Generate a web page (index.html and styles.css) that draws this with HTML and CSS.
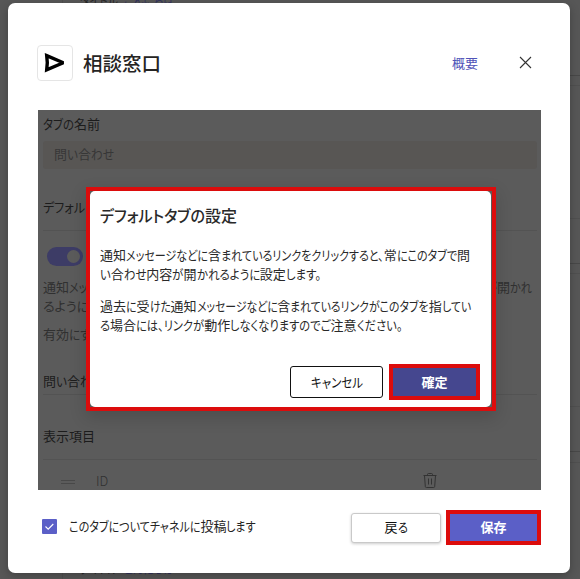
FILE: index.html
```html
<!DOCTYPE html>
<html lang="ja">
<head>
<meta charset="utf-8">
<title>相談窓口</title>
<link rel="stylesheet" href="styles.css">
</head>
<body>
<div class="backdrop">
  <div class="card card-a"></div>
  <div class="card card-b"><hr></div>
  <div class="card card-c"><hr></div>
  <div class="card card-d"></div>
  <p class="post post-top"><span data-w="41">タイトル:</span> <span class="link" data-w="50">こんにちは</span></p>
  <p class="post post-bottom"><span data-w="41">タイトル:</span> <span class="link" data-w="50">こんにちは</span></p>
</div>
<main class="modal">
  <header class="head">
    <div class="logo"><svg width="24" height="22" viewBox="0 0 24 22"><path d="M3.7 3.6 20.3 10.7 3.7 17.8 4.3 10.7Z" fill="none" stroke="#000" stroke-width="3.4" stroke-linejoin="miter" stroke-miterlimit="2"/></svg></div>
    <h1>相談窓口</h1>
    <a class="about">概要</a>
    <svg class="close" width="13" height="13" viewBox="0 0 13 13"><path d="M1 1 12 12M12 1 1 12" stroke="#333" stroke-width="1.1" fill="none"/></svg>
  </header>
  <section class="settings">
    <h2 class="tab-name"><span data-w="57">タブの名前</span></h2>
    <div class="field"><span data-w="60">問い合わせ</span></div>
    <h2 class="default"><span data-w="110">デフォルトタブの設定</span></h2>
    <div class="toggle"><i></i></div>
    <p class="desc"><span data-w="489">通知メッセージなどに含まれているリンクをクリックすると、常にこのタブで問い合わせ内容が開かれ</span><br><span data-w="112">るように設定します。</span></p>
    <p class="enable"><span data-w="58">有効にする</span></p>
    <h2 class="inquiry"><span data-w="60">問い合わせ</span></h2>
    <h2 class="columns">表示項目</h2>
    <div class="row">
      <svg width="14" height="5" viewBox="0 0 14 5"><path d="M0 .5H14M0 3.5H14" stroke="#484848"/></svg>
      <span class="id">ID</span>
      <svg class="trash" width="14" height="16" viewBox="0 0 14 16"><path d="M.5 2.5H13.5M4.5 2.5V1.5Q4.5.5 5.5.5H8.5Q9.5.5 9.5 1.5V2.5M1.5 2.5 2.3 13.5Q2.4 14.5 3.4 14.5H10.6Q11.6 14.5 11.7 13.5L12.5 2.5M5.5 5.5V11.5M8.5 5.5V11.5" fill="none" stroke="#333"/></svg>
    </div>
    <div class="frame">
      <div class="dialog">
        <h3><span data-w="137">デフォルトタブの設定</span></h3>
        <p><span data-w="370">通知メッセージなどに含まれているリンクをクリックすると、常にこのタブで問</span><br><span data-w="221">い合わせ内容が開かれるように設定します。</span></p>
        <p><span data-w="371">過去に受けた通知メッセージなどに含まれているリンクがこのタブを指してい</span><br><span data-w="302">る場合には、リンクが動作しなくなりますのでご注意ください。</span></p>
        <div class="actions"><button class="cancel"><span data-w="52">キャンセル</span></button><button class="confirm">確定</button></div>
      </div>
    </div>
  </section>
  <footer class="foot">
    <svg class="check" width="15" height="15" viewBox="0 0 15 15"><rect width="15" height="15" rx="1" fill="#5b5fc7"/><path d="M3.5 7.5 6.2 10.2 11.3 5" fill="none" stroke="#fff" stroke-width="1.1"/></svg>
    <span class="post-label"><span data-w="187">このタブについてチャネルに投稿します</span></span>
    <button class="back"><span data-w="23">戻る</span></button>
    <button class="save">保存</button>
  </footer>
</main>
<script src="kana.js"></script>
</body>
</html>
```
FILE: kana.js
```js
// Condense the kana runs of each line to its measure; kanji keep their full width.
document.querySelectorAll('[data-w]').forEach(line => {
  const target = Number(line.dataset.w);
  const parts = line.textContent.match(/[\u3000-\u30ff:]+|[^\u3000-\u30ff:]+/g);
  line.textContent = '';
  let kanaWidth = 0, otherWidth = 0;
  const runs = [];
  parts.forEach(text => {
    const run = document.createElement('span');
    run.textContent = text;
    line.append(run);
    const width = run.getBoundingClientRect().width;
    if (/[\u3000-\u30ff]/.test(text)) {
      kanaWidth += width;
      runs.push([run, width]);
    } else {
      otherWidth += width;
    }
  });
  const scale = (target - otherWidth) / kanaWidth;
  runs.forEach(([run, width]) => {
    run.className = 'kana';
    run.style.width = width * scale + 'px';
    run.style.transform = `scaleX(${scale})`;
  });
});
```
FILE: styles.css
```css
* { box-sizing: border-box; margin: 0; padding: 0; }
body {
  width: 580px; height: 579px; overflow: hidden; position: relative;
  padding: 3px 10px 6px 8px; background: #575757; color: #252423;
  font: 13px/19px "Noto Sans CJK JP", sans-serif;
  font-feature-settings: "palt"; white-space: nowrap;
}
.kana { display: inline-block; transform-origin: 0 50%; }
.backdrop { position: absolute; inset: 0; overflow: hidden; }
.post { position: absolute; left: 80px; color: #292929; }
.link { color: #33345d; }
.post-top { top: -10px; }
.post-bottom { top: 558px; }
.card { position: absolute; left: 62px; right: -9px; border: 1px solid #505050; border-bottom-color: #484848; }
.card hr { margin-top: 132px; border: 0; border-top: 1px solid #505050; }
.card-a { top: -100px; height: 176px; }
.card-b { top: 85px; height: 179px; }
.card-c { top: 273px; height: 179px; }
.card-d { top: 462px; height: 150px; }
.modal {
  position: relative; width: 562px; height: 570px; border-radius: 7px;
  background: #fff; box-shadow: 0 3px 10px rgba(0,0,0,.25);
  padding: 42px 29px 0;
}
.head { display: flex; align-items: center; height: 36px; }
.logo { width: 36px; height: 36px; border: 1px solid #e5e5e5; border-radius: 4px; display: grid; place-items: center; }
h1 { margin-left: 10px; font-size: 19.5px; line-height: 30px; font-weight: 500; font-feature-settings: normal; }
.about { margin: -2px 0 0 auto; color: #5053b8; font-feature-settings: normal; }
.close { margin: -2px 9px 0 41px; }
.settings {
  position: relative; width: 503px; height: 380px; margin: 29px 0 0 1px;
  padding: 4px 4px 0 5px; background: #5b5b5b; color: #303030; overflow: hidden;
}
h2 { font-size: 13px; line-height: 19px; font-weight: 400; color: #1c1c1c; }
.field { height: 28px; margin-top: 8px; padding: 3px 11px; border-radius: 3px; background: #585654; color: #373737; }
.default { margin-top: 28px; height: 34px; border-bottom: 1px solid #535353; }
.toggle { width: 36px; height: 19px; margin: 16px 0 0 4px; padding: 3px; border-radius: 10px; background: #3d3c66; }
.toggle i { display: block; width: 13px; height: 13px; margin-left: 17px; border-radius: 50%; background: #5b5b5b; }
.desc { margin-top: 11px; }
.enable { margin-top: 9px; }
.inquiry { margin-top: 28px; height: 24px; border-bottom: 1px solid #535353; }
.columns { margin-top: 31px; height: 34px; border-bottom: 1px solid #535353; }
.row { display: flex; align-items: center; height: 44px; padding: 0 106px 0 18px; }
.id { margin: -3px 0 0 21px; font-weight: 300; }
.trash { margin: -2px -6px 0 auto; }
.frame {
  position: absolute; left: 48px; top: 77px; width: 410px; height: 224px;
  border: 4px solid #dc0c0c; background: #5b5b5b; box-shadow: 0 6px 16px rgba(0,0,0,.16);
}
.dialog { width: 401px; height: 216px; border-radius: 5px; background: #fff; color: #292929; padding: 11px 11px 0 10px; }
h3 { font-size: 16px; line-height: 26px; font-weight: 500; }
.dialog p { margin-top: 17px; }
.dialog p + p { margin-top: 13px; }
.actions { display: flex; align-items: center; margin-top: 30px; height: 36px; justify-content: flex-end; gap: 6px; }
button { font: inherit; font-feature-settings: inherit; border-radius: 3px; background: #fff; color: #252423; padding-bottom: 2px; }
.cancel { width: 93px; height: 32px; border: 1px solid #111; color: #111; }
.confirm, .save { border: 4px solid #dc0c0c; border-radius: 0; color: #fff; font-weight: 700; }
.confirm { width: 91px; height: 36px; background: #45478f; }
.foot { display: flex; align-items: center; height: 35px; margin: 20px 0 0 5px; }
.check { position: relative; top: -1px; }
.post-label { margin: -4px 0 0 12px; }
.back { width: 90px; height: 30px; margin-left: auto; border: 1px solid #c9c9c9; box-shadow: 0 1px 3px rgba(0,0,0,.2); color: #111; }
.save { width: 95px; height: 35px; margin-left: 5px; background: #5b5fc7; }
```
